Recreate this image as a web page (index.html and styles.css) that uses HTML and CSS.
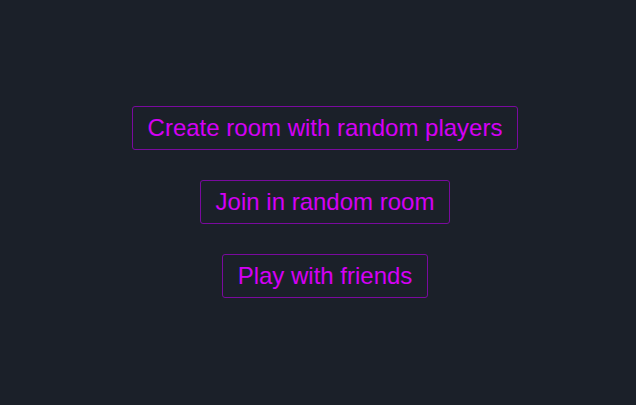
FILE: index.html
```html
<!DOCTYPE html>
<html>
<head>
<meta charset="utf-8">
<link rel="stylesheet" href="styles.css">
</head>
<body>
<main class="menu">
  <button class="btn">Create room with random players</button>
  <button class="btn">Join in random room</button>
  <button class="btn">Play with friends</button>
</main>
</body>
</html>
```
FILE: styles.css
```css
html, body {
  margin: 0;
  height: 100%;
  background: #1b2029;
}
.menu {
  height: 100%;
  display: flex;
  flex-direction: column;
  align-items: center;
  justify-content: center;
  gap: 30px;
  padding-left: 14px;
  padding-bottom: 2px;
  box-sizing: border-box;
}
.btn {
  font-family: "Liberation Sans", Arial, sans-serif;
  font-size: 24px;
  line-height: 28px;
  color: #d400f5;
  background: transparent;
  border: 1px solid #7a0a9e;
  border-radius: 3px;
  padding: 7px 14.5px;
  height: 44px;
  box-sizing: border-box;
  cursor: pointer;
}
```
